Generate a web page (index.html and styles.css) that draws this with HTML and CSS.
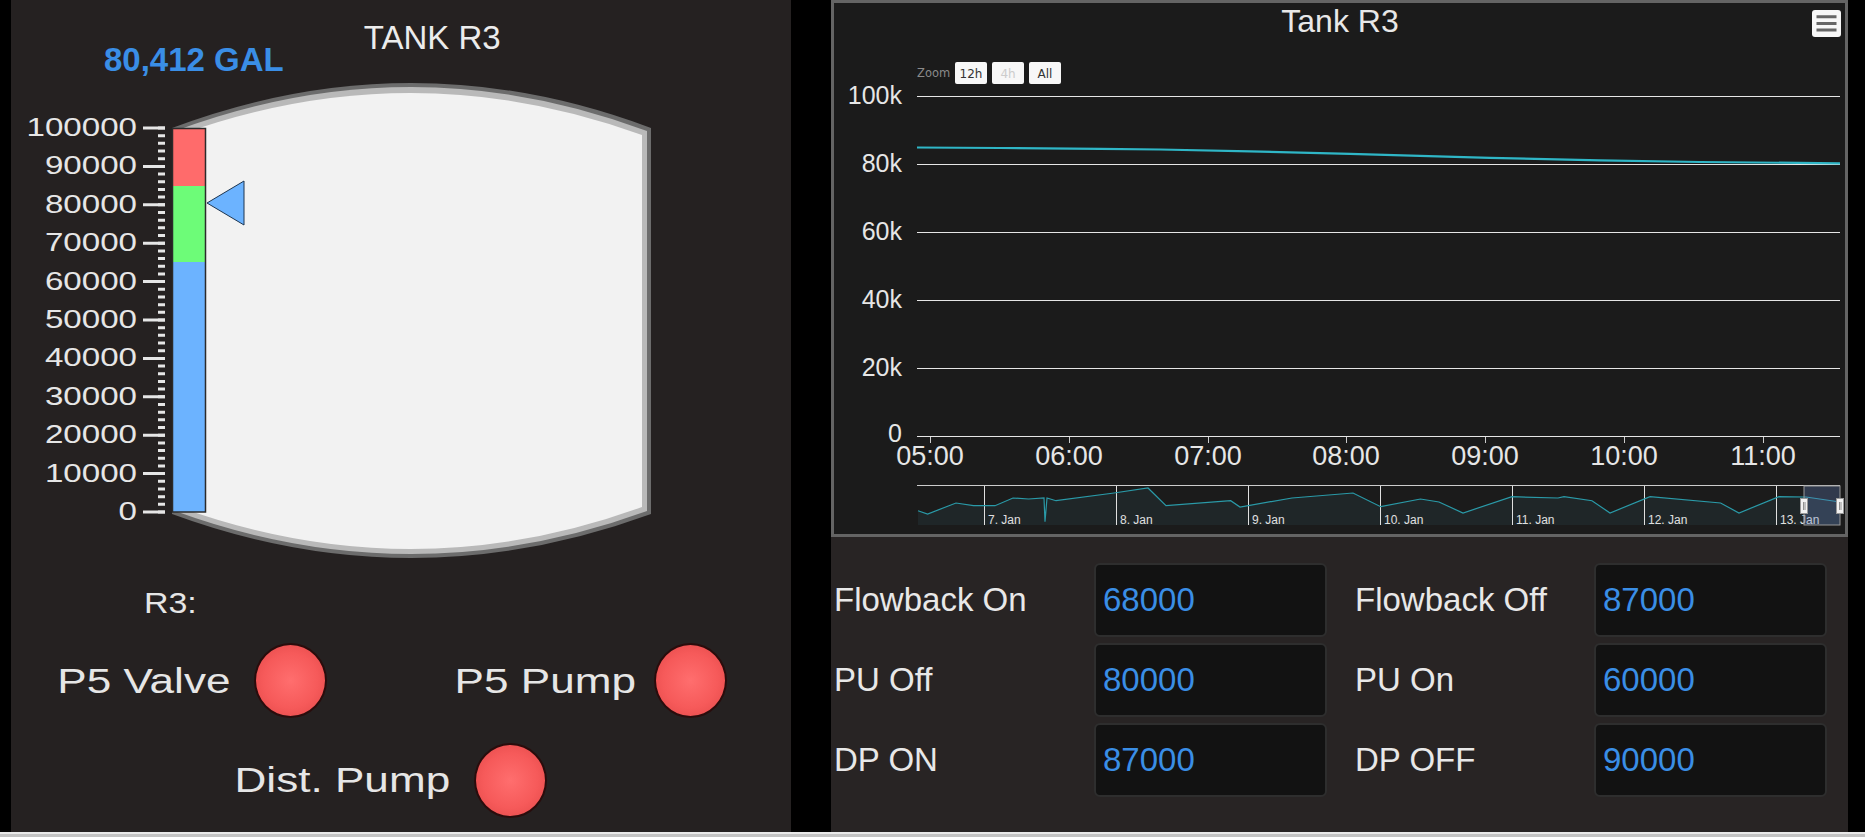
FILE: index.html
```html
<!DOCTYPE html>
<html lang="en">
<head>
    <meta charset="UTF-8">
    <meta name="viewport" content="width=device-width, initial-scale=1.0">
    <title>Tank R3</title>
    <link rel="stylesheet" href="styles.css">
</head>
<body>

<div class="screen">

    <!-- Tank mimic -->
    <section class="tank-panel">
        <div class="tank-header">
            <span class="tank-volume">80,412 GAL</span>
            <span class="tank-name">TANK R3</span>
        </div>

        <svg class="tank-svg" width="780" height="490" viewBox="11 80 780 490">
            <!-- vessel -->
            <path d="M172 128 Q411 38 651 128 L651 514 Q411 602 172 514 Z" fill="#6c6c6c"/>
            <path d="M175 131 Q411 43 647 131 L647 511 Q411 597 175 511 Z" fill="#b9b9b9"/>
            <path d="M179 135 Q411 51 642 135 L642 507 Q411 591 179 507 Z" fill="#f2f2f2"/>

            <!-- scale ticks -->
            <line x1="154" y1="126.5" x2="154" y2="514" stroke="#e6e6e6" stroke-width="22" stroke-dasharray="3 35.4"/>
            <line x1="161.5" y1="126.5" x2="161.5" y2="514" stroke="#e6e6e6" stroke-width="7" stroke-dasharray="3 4.68"/>

            <g class="scale-labels" transform="translate(137 0) scale(1.25 1)">
                <text x="0" y="136">100000</text>
                <text x="0" y="174.4">90000</text>
                <text x="0" y="212.8">80000</text>
                <text x="0" y="251.2">70000</text>
                <text x="0" y="289.6">60000</text>
                <text x="0" y="328">50000</text>
                <text x="0" y="366.4">40000</text>
                <text x="0" y="404.8">30000</text>
                <text x="0" y="443.2">20000</text>
                <text x="0" y="481.6">10000</text>
                <text x="0" y="520">0</text>
            </g>

            <!-- level bar: high / normal / low bands -->
            <rect x="172.5" y="262" width="33" height="250" fill="#6cb3ff"/>
            <rect x="172.5" y="186" width="33" height="76" fill="#6dfc78"/>
            <rect x="172.5" y="128.5" width="33" height="57.5" fill="#ff6b6b"/>
            <rect x="172.5" y="128.5" width="33" height="383.5" fill="none" stroke="#2b2b2b" stroke-width="1.5"/>

            <!-- current level pointer -->
            <polygon points="207,203 244,181 244,225" fill="#6cb3ff" stroke="#1d3550" stroke-width="1"/>
        </svg>

        <div class="tank-tag"><span class="stretch">R3:</span></div>

        <div class="lamp-row lamp-row-top">
            <div class="lamp-item">
                <span class="lamp-label">P5 Valve</span>
                <span class="lamp"></span>
            </div>
            <div class="lamp-item lamp-item-tight">
                <span class="lamp-label">P5 Pump</span>
                <span class="lamp"></span>
            </div>
        </div>

        <div class="lamp-row lamp-row-bottom">
            <div class="lamp-item">
                <span class="lamp-label">Dist. Pump</span>
                <span class="lamp"></span>
            </div>
        </div>
    </section>

    <!-- Trend + setpoints -->
    <section class="trend-panel">
        <div class="chart">
            <svg width="1011" height="531" viewBox="834 3 1011 531">
                <text class="chart-title" x="1340" y="31.5">Tank R3</text>

                <!-- context menu button -->
                <rect x="1812" y="10" width="29" height="27" rx="3" fill="#f7f7f7"/>
                <path d="M1816.5 16.7 H1836.5 M1816.5 23.4 H1836.5 M1816.5 30.1 H1836.5" stroke="#666" stroke-width="3"/>

                <!-- range selector -->
                <text class="zoom-label" x="917" y="77">Zoom</text>
                <rect x="955" y="62" width="32" height="22" rx="2" fill="#f7f7f7"/>
                <text class="zoom-btn" x="971" y="77.5">12h</text>
                <rect x="992" y="62" width="32" height="22" rx="2" fill="#f7f7f7"/>
                <text class="zoom-btn zoom-btn-off" x="1008" y="77.5">4h</text>
                <rect x="1029" y="62" width="32" height="22" rx="2" fill="#f7f7f7"/>
                <text class="zoom-btn" x="1045" y="77.5">All</text>

                <!-- grid -->
                <g stroke="#e6e6e6" stroke-width="1">
                    <line x1="917" y1="96.5" x2="1840" y2="96.5"/>
                    <line x1="917" y1="164.5" x2="1840" y2="164.5"/>
                    <line x1="917" y1="232.5" x2="1840" y2="232.5"/>
                    <line x1="917" y1="300.5" x2="1840" y2="300.5"/>
                    <line x1="917" y1="368.5" x2="1840" y2="368.5"/>
                    <line x1="917" y1="436.5" x2="1840" y2="436.5"/>
                </g>

                <g class="y-labels">
                    <text x="902" y="103.5">100k</text>
                    <text x="902" y="171.5">80k</text>
                    <text x="902" y="239.5">60k</text>
                    <text x="902" y="307.5">40k</text>
                    <text x="902" y="375.5">20k</text>
                    <text x="902" y="442">0</text>
                </g>

                <g stroke="#cccccc" stroke-width="1">
                    <line x1="930.5" y1="437" x2="930.5" y2="443"/>
                    <line x1="1069.5" y1="437" x2="1069.5" y2="443"/>
                    <line x1="1208.5" y1="437" x2="1208.5" y2="443"/>
                    <line x1="1346.5" y1="437" x2="1346.5" y2="443"/>
                    <line x1="1485.5" y1="437" x2="1485.5" y2="443"/>
                    <line x1="1624.5" y1="437" x2="1624.5" y2="443"/>
                    <line x1="1763.5" y1="437" x2="1763.5" y2="443"/>
                </g>

                <g class="x-labels">
                    <text x="930" y="464.5">05:00</text>
                    <text x="1069" y="464.5">06:00</text>
                    <text x="1208" y="464.5">07:00</text>
                    <text x="1346" y="464.5">08:00</text>
                    <text x="1485" y="464.5">09:00</text>
                    <text x="1624" y="464.5">10:00</text>
                    <text x="1763" y="464.5">11:00</text>
                </g>

                <polyline class="series" points="917,147.5 1000,148 1100,148.8 1160,149.5 1250,151.3 1350,153.8 1490,157.8 1600,160.3 1700,162 1840,163.3"/>

                <!-- navigator -->
                <path d="M918 510.7 L927.6 514 L956 503 L973.5 505.7 L995 505.7 L1013 498 L1028.6 499 L1044 498 L1045 521.7 L1047 498 L1056 500.7 L1114 493 L1148 488 L1166 505.7 L1230.7 500.7 L1240 507 L1292 498 L1353 493 L1380.7 506.7 L1420.5 499 L1439 502 L1463 513 L1512 496.7 L1558 498 L1564 496.7 L1592 500.7 L1610 513 L1650 496.7 L1720.6 503 L1739 513 L1779 496.7 L1806 497 L1840 502 L1840 525 L918 525 Z" fill="#1f2628"/>
                <g stroke="#e0e0e0" stroke-width="1">
                    <line x1="984.5" y1="486" x2="984.5" y2="525"/>
                    <line x1="1116.5" y1="486" x2="1116.5" y2="525"/>
                    <line x1="1248.5" y1="486" x2="1248.5" y2="525"/>
                    <line x1="1380.5" y1="486" x2="1380.5" y2="525"/>
                    <line x1="1512.5" y1="486" x2="1512.5" y2="525"/>
                    <line x1="1644.5" y1="486" x2="1644.5" y2="525"/>
                    <line x1="1776.5" y1="486" x2="1776.5" y2="525"/>
                </g>
                <polyline class="nav-series" points="918,510.7 927.6,514 956,503 973.5,505.7 995,505.7 1013,498 1028.6,499 1044,498 1045,521.7 1047,498 1056,500.7 1114,493 1148,488 1166,505.7 1230.7,500.7 1240,507 1292,498 1353,493 1380.7,506.7 1420.5,499 1439,502 1463,513 1512,496.7 1558,498 1564,496.7 1592,500.7 1610,513 1650,496.7 1720.6,503 1739,513 1779,496.7 1806,497 1840,502"/>
                <line x1="917" y1="485.5" x2="1840" y2="485.5" stroke="#cccccc" stroke-width="1"/>

                <g class="nav-labels">
                    <text x="988" y="524">7. Jan</text>
                    <text x="1120" y="524">8. Jan</text>
                    <text x="1252" y="524">9. Jan</text>
                    <text x="1384" y="524">10. Jan</text>
                    <text x="1516" y="524">11. Jan</text>
                    <text x="1648" y="524">12. Jan</text>
                    <text x="1780" y="524">13. Jan</text>
                </g>

                <rect x="1804" y="486" width="36" height="39" fill="rgba(102,133,194,0.3)" stroke="#999" stroke-width="1"/>
                <g fill="#f2f2f2" stroke="#999" stroke-width="1">
                    <rect x="1800.5" y="498.5" width="7" height="15"/>
                    <rect x="1836.5" y="498.5" width="7" height="15"/>
                </g>
                <path d="M1803.5 502 V510 M1805 502 V510 M1839.5 502 V510 M1841 502 V510" stroke="#777" stroke-width="0.8"/>
            </svg>
        </div>

        <div class="setpoints">
            <label class="sp-label">Flowback On</label>
            <input class="sp-input" type="text" value="68000" readonly>
            <label class="sp-label sp-label-right">Flowback Off</label>
            <input class="sp-input" type="text" value="87000" readonly>

            <label class="sp-label">PU Off</label>
            <input class="sp-input" type="text" value="80000" readonly>
            <label class="sp-label sp-label-right">PU On</label>
            <input class="sp-input" type="text" value="60000" readonly>

            <label class="sp-label">DP ON</label>
            <input class="sp-input" type="text" value="87000" readonly>
            <label class="sp-label sp-label-right">DP OFF</label>
            <input class="sp-input" type="text" value="90000" readonly>
        </div>
    </section>

</div>

<div class="scrollbar"></div>

</body>
</html>
```

FILE: styles.css
```css
html, body {
    margin: 0;
    height: 837px;
    overflow: hidden;
}

body {
    background-color: #000;
    font-family: "Liberation Sans", Arial, sans-serif;
    color: #e6e6e6;
}

.screen {
    display: flex;
    gap: 40px;
    height: 832px;
    padding-left: 11px;
}

/* ---- left: tank mimic ---- */

.tank-panel {
    width: 780px;
    background-color: #252121;
    display: flex;
    flex-direction: column;
}

.tank-header {
    height: 80px;
    box-sizing: border-box;
    padding: 18px 0 0 93px;
    display: flex;
    align-items: flex-start;
    gap: 80px;
}

.tank-volume {
    margin-top: 22px;
    font-size: 33px;
    line-height: 40px;
    font-weight: bold;
    color: #3a8ee6;
}

.tank-name {
    font-size: 33px;
    line-height: 40px;
    color: #ececec;
}

.tank-svg {
    display: block;
}

.scale-labels text {
    font-family: "Liberation Sans", Arial, sans-serif;
    font-size: 26.5px;
    fill: #e6e6e6;
    text-anchor: end;
}

.tank-tag {
    margin-top: 16px;
    padding-left: 133px;
    font-size: 29px;
    line-height: 34px;
}

.stretch {
    display: inline-block;
    transform: scaleX(1.17);
    transform-origin: left center;
}

.lamp-row {
    height: 74px;
}

.lamp-row-top {
    margin-top: 23px;
    display: grid;
    grid-template-columns: 316px 400px;
    justify-items: end;
}

.lamp-row-bottom {
    margin-top: 26px;
    display: flex;
    justify-content: flex-end;
    padding-right: 244px;
}

.lamp-item {
    display: flex;
    align-items: center;
    gap: 24px;
}

.lamp-item-tight {
    gap: 18px;
}

.lamp-label {
    display: inline-block;
    font-size: 35px;
    line-height: 40px;
    transform: scaleX(1.26);
    transform-origin: right center;
}

.lamp {
    width: 69px;
    height: 71px;
    border-radius: 50%;
    border: 2px solid #2a0c0c;
    background: radial-gradient(circle at 50% 50%, #ff6e6e 0%, #f65a5a 55%, #e04646 100%);
}

/* ---- right: trend + setpoints ---- */

.trend-panel {
    width: 1017px;
    display: flex;
    flex-direction: column;
}

.chart {
    height: 537px;
    box-sizing: border-box;
    border: 3px solid #646464;
    background-color: #1b1b1b;
}

.chart svg {
    display: block;
}

.chart-title {
    font-family: "Liberation Sans", Arial, sans-serif;
    font-size: 32px;
    fill: #e8e8e8;
    text-anchor: middle;
}

.zoom-label {
    font-family: "DejaVu Sans", sans-serif;
    font-size: 11.5px;
    fill: #8a8a8a;
}

.zoom-btn {
    font-family: "DejaVu Sans", sans-serif;
    font-size: 12px;
    fill: #333;
    text-anchor: middle;
}

.zoom-btn-off {
    fill: #cccccc;
}

.y-labels text {
    font-family: "Liberation Sans", Arial, sans-serif;
    font-size: 25px;
    fill: #e6e6e6;
    text-anchor: end;
}

.x-labels text {
    font-family: "Liberation Sans", Arial, sans-serif;
    font-size: 27px;
    fill: #e6e6e6;
    text-anchor: middle;
}

.series {
    fill: none;
    stroke: #2fb6c6;
    stroke-width: 2.2;
}

.nav-series {
    fill: none;
    stroke: #2a9aa8;
    stroke-width: 1.2;
}

.nav-labels text {
    font-family: "Liberation Sans", Arial, sans-serif;
    font-size: 12px;
    fill: #e0e0e0;
}

.setpoints {
    flex: 1;
    background-color: #282424;
    padding: 26px 0 0 3px;
    display: grid;
    grid-template-columns: 260px 233px 267px 233px;
    grid-auto-rows: 74px;
    row-gap: 6px;
    align-content: start;
}

.sp-label {
    align-self: center;
    font-size: 33px;
    line-height: 40px;
    color: #e8e8e8;
}

.sp-label-right {
    padding-left: 28px;
}

.sp-input {
    box-sizing: border-box;
    width: 233px;
    height: 74px;
    padding: 0 7px;
    border: 2px solid #2e2e2e;
    border-radius: 6px;
    background-color: #121212;
    color: #3a8ee6;
    font-family: "Liberation Sans", Arial, sans-serif;
    font-size: 33px;
    outline: none;
}

.scrollbar {
    height: 5px;
    background: linear-gradient(#e9e9e9 0, #e9e9e9 2px, #c3c3c3 2px);
}
```
